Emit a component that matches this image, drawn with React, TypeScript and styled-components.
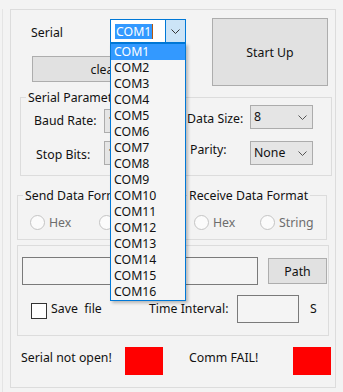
import styled, { createGlobalStyle } from 'styled-components'

const GlobalStyle = createGlobalStyle`
    html, body {
        margin: 0;
        padding: 0;
        background: #f3f3f3;
    }
    body {
        font-family: "Noto Sans", "Segoe UI", sans-serif;
        font-size: 12.3px;
        color: #111;
    }
    * {
        box-sizing: border-box;
    }
`;

const Window = styled.div`
    width: 343px;
    height: 392px;
    padding: 9px 0 0 2px;
    background: #f3f3f3;
    overflow: hidden;
`;

const Edge = styled.div`
    height: 100%;
    border-left: 1px solid #e4e4e4;
    padding-left: 7px;
`;

const Frame = styled.div`
    width: 326px;
    height: 379px;
    border: 1px solid #dcdcdc;
    display: flex;
    flex-direction: column;
`;

const TopRow = styled.div`
    display: flex;
    align-items: flex-start;
    padding-top: 8px;
`;

const LeftCol = styled.div`
    margin-left: 20px;
    width: 155px;
    display: flex;
    flex-direction: column;
`;

const SerialRow = styled.div`
    margin-top: 1px;
    height: 24px;
    display: flex;
    align-items: center;
`;

const Text = styled.span<{ $w?: number; $pl?: number; $top?: number; $color?: string }>`
    display: block;
    flex: none;
    width: ${(p) => (p.$w ? `${p.$w}px` : 'auto')};
    padding-left: ${(p) => p.$pl ?? 0}px;
    margin-top: ${(p) => p.$top ?? 0}px;
    line-height: 16px;
    white-space: pre;
    color: ${(p) => p.$color ?? '#111'};
`;

const OpenCombo = styled.div`
    position: relative;
    width: 76px;
    height: 24px;
    border: 1px solid #0078d7;
    background: #fff;
    display: flex;
`;

const ComboText = styled.div`
    flex: 1;
    display: flex;
    align-items: center;
    padding-left: 4px;
`;

const Selected = styled.span`
    background: #3399ff;
    color: #fff;
    line-height: 15px;
    padding: 0 1px;
`;

const Caret = styled.span`
    width: 1px;
    height: 15px;
    background: #b4570f;
`;

const DropButton = styled.div`
    width: 20px;
    border-left: 1px solid #0078d7;
    background: #cce4f7;
    display: flex;
    align-items: center;
    justify-content: center;
`;

const DropList = styled.div`
    position: absolute;
    top: 23px;
    left: -1px;
    width: 76px;
    border: 1px solid #0078d7;
    background: #f5f5f5;
    box-shadow: 2px 2px 3px rgba(0, 0, 0, 0.25);
    z-index: 10;
`;

const DropItem = styled.div<{ $active?: boolean }>`
    height: 16px;
    line-height: 16px;
    padding-left: 3px;
    background: ${(p) => (p.$active ? '#3399ff' : 'transparent')};
    color: ${(p) => (p.$active ? '#fff' : '#111')};
`;

const Button = styled.button<{ $w: number; $h: number }>`
    width: ${(p) => p.$w}px;
    height: ${(p) => p.$h}px;
    flex: none;
    padding: 0;
    background: #e1e1e1;
    border: 1px solid #adadad;
    font: inherit;
    color: #111;
`;

const ClearButton = styled(Button)`
    margin-top: 13px;
    margin-left: 1px;
`;

const StartButton = styled(Button)`
    margin-left: 26px;
`;

const Group = styled.fieldset<{ $w: number; $ml: number; $mt: number; $pb: number }>`
    margin: ${(p) => p.$mt}px 0 0 ${(p) => p.$ml}px;
    padding: 0 0 ${(p) => p.$pb}px 0;
    min-width: 0;
    width: ${(p) => p.$w}px;
    border: 1px solid #dcdcdc;
`;

const Legend = styled.legend`
    margin-left: 5px;
    padding: 0 2px;
    line-height: 15px;
    font-size: 12.3px;
    color: #111;
`;

const ParamRow = styled.div<{ $mt?: number }>`
    display: flex;
    align-items: flex-start;
    margin-top: ${(p) => p.$mt ?? 0}px;
`;

const Combo = styled.div<{ $top?: number }>`
    width: 63px;
    height: 24px;
    flex: none;
    margin-top: ${(p) => p.$top ?? 0}px;
    border: 1px solid #acacac;
    background: #e5e5e5;
    display: flex;
    align-items: center;
    justify-content: space-between;
    padding: 0 5px 0 3px;
    line-height: 16px;
`;

const FormatRow = styled.div`
    display: flex;
    margin-top: 12px;
`;

const RadioRow = styled.div<{ $pl: number }>`
    display: flex;
    margin-top: 11px;
    padding-left: ${(p) => p.$pl}px;
`;

const RadioItem = styled.div<{ $w: number }>`
    width: ${(p) => p.$w}px;
    height: 16px;
    display: flex;
    align-items: center;
    gap: 4px;
    color: #6d6d6d;
`;

const RadioDot = styled.span`
    width: 15px;
    height: 15px;
    border-radius: 50%;
    border: 1px solid #c4c4c4;
    background: #fbfbfb;
    flex: none;
`;

const FileRow = styled.div<{ $mt: number }>`
    display: flex;
    align-items: center;
    margin-top: ${(p) => p.$mt}px;
`;

const TextBox = styled.div<{ $w: number; $ml: number }>`
    width: ${(p) => p.$w}px;
    height: 28px;
    margin-left: ${(p) => p.$ml}px;
    border: 1px solid #7a7a7a;
    background: #f4f4f4;
    flex: none;
`;

const PathButton = styled(Button)`
    margin-left: 10px;
`;

const CheckBox = styled.span`
    width: 16px;
    height: 16px;
    margin: 4px 4px 0 13px;
    border: 1px solid #333;
    background: #fff;
    flex: none;
`;

const StatusRow = styled.div`
    display: flex;
    align-items: center;
    margin-top: 11px;
    padding-left: 10px;
`;

const StatusText = styled.span<{ $ml?: number }>`
    width: 104px;
    margin-left: ${(p) => p.$ml ?? 0}px;
    margin-bottom: 6px;
    line-height: 16px;
    flex: none;
`;

const Lamp = styled.span`
    width: 38px;
    height: 28px;
    background: #ff0000;
    flex: none;
`;

const Chevron = ({ color = '#555' }: { color?: string }) => (
    <svg width="9" height="5" viewBox="0 0 9 5">
        <path d="M0.5 0.5 L4.5 4.5 L8.5 0.5" fill="none" stroke={color} strokeWidth="1" />
    </svg>
);

const ports = Array.from({ length: 16 }, (_, i) => `COM${i + 1}`);

function App() {
    return (
        <Window>
            <GlobalStyle />
            <Edge>
                <Frame>
                    <TopRow>
                        <LeftCol>
                            <SerialRow>
                                <Text $w={79} $top={3}>Serial</Text>
                                <OpenCombo>
                                    <ComboText>
                                        <Selected>COM1</Selected>
                                        <Caret />
                                    </ComboText>
                                    <DropButton>
                                        <Chevron color="#333" />
                                    </DropButton>
                                    <DropList>
                                        {ports.map((port, i) => (
                                            <DropItem key={port} $active={i === 0}>
                                                {port}
                                            </DropItem>
                                        ))}
                                    </DropList>
                                </OpenCombo>
                            </SerialRow>
                            <ClearButton $w={145} $h={26}>clear</ClearButton>
                        </LeftCol>
                        <StartButton $w={116} $h={68}>Start Up</StartButton>
                    </TopRow>

                    <Group $w={312} $ml={9} $mt={4} $pb={10}>
                        <Legend>Serial Parameter</Legend>
                        <ParamRow>
                            <Text $w={83} $pl={13} $top={8}>Baud Rate:</Text>
                            <Combo $top={4}>
                                <span>115200</span>
                                <Chevron />
                            </Combo>
                            <Text $w={83} $pl={20} $top={6}>Data Size:</Text>
                            <Combo>
                                <span>8</span>
                                <Chevron />
                            </Combo>
                        </ParamRow>
                        <ParamRow $mt={8}>
                            <Text $w={83} $pl={15} $top={6}>Stop Bits:</Text>
                            <Combo>
                                <span>1</span>
                                <Chevron />
                            </Combo>
                            <Text $w={83} $pl={23} $top={1}>Parity:</Text>
                            <Combo>
                                <span>None</span>
                                <Chevron />
                            </Combo>
                        </ParamRow>
                    </Group>

                    <FormatRow>
                        <Group $w={162} $ml={6} $mt={0} $pb={9}>
                            <Legend>Send Data Format</Legend>
                            <RadioRow $pl={12}>
                                <RadioItem $w={69}>
                                    <RadioDot />
                                    Hex
                                </RadioItem>
                                <RadioItem $w={70}>
                                    <RadioDot />
                                    String
                                </RadioItem>
                            </RadioRow>
                        </Group>
                        <Group $w={146} $ml={2} $mt={0} $pb={9}>
                            <Legend>Receive Data Format</Legend>
                            <RadioRow $pl={12}>
                                <RadioItem $w={70}>
                                    <RadioDot />
                                    Hex
                                </RadioItem>
                                <RadioItem $w={70}>
                                    <RadioDot />
                                    String
                                </RadioItem>
                            </RadioRow>
                        </Group>
                    </FormatRow>

                    <Group $w={312} $ml={6} $mt={5} $pb={12}>
                        <FileRow $mt={11}>
                            <TextBox $w={236} $ml={4} />
                            <PathButton $w={59} $h={26}>Path</PathButton>
                        </FileRow>
                        <FileRow $mt={10}>
                            <CheckBox />
                            <Text $w={98}>Save  file</Text>
                            <Text $w={88}>Time Interval:</Text>
                            <TextBox $w={62} $ml={0} />
                            <Text $pl={11}>S</Text>
                        </FileRow>
                    </Group>

                    <StatusRow>
                        <StatusText>Serial not open!</StatusText>
                        <Lamp />
                        <StatusText $ml={26}>Comm FAIL!</StatusText>
                        <Lamp />
                    </StatusRow>
                </Frame>
            </Edge>
        </Window>
    )
}

export default App
